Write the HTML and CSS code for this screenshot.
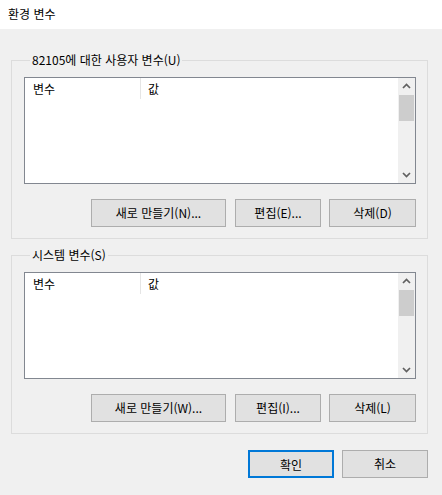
FILE: index.html
```html
<!DOCTYPE html>
<html lang="ko">
<head>
<meta charset="utf-8">
<title>환경 변수</title>
<link rel="stylesheet" href="styles.css">
</head>
<body>
<div class="window">
  <div class="titlebar">환경 변수</div>
  <div class="content">
    <fieldset class="group">
      <legend>82105에 대한 사용자 변수(U)</legend>
      <div class="list">
        <div class="list-body">
          <div class="header">
            <div class="col col-name">변수</div>
            <div class="col col-value">값</div>
          </div>
        </div>
        <div class="scrollbar">
          <div class="arrow"><svg width="17" height="17" viewBox="0 0 17 17"><polyline points="5,10 8.5,6.5 12,10" fill="none" stroke="#606060" stroke-width="1.7"/></svg></div>
          <div class="thumb"></div>
          <div class="track"></div>
          <div class="arrow"><svg width="17" height="17" viewBox="0 0 17 17"><polyline points="5,7 8.5,10.5 12,7" fill="none" stroke="#606060" stroke-width="1.7"/></svg></div>
        </div>
      </div>
      <div class="buttons">
        <button class="btn btn-wide">새로 만들기(N)...</button>
        <button class="btn btn-mid">편집(E)...</button>
        <button class="btn btn-last">삭제(D)</button>
      </div>
    </fieldset>
    <fieldset class="group group-second">
      <legend>시스템 변수(S)</legend>
      <div class="list">
        <div class="list-body">
          <div class="header">
            <div class="col col-name">변수</div>
            <div class="col col-value">값</div>
          </div>
        </div>
        <div class="scrollbar">
          <div class="arrow"><svg width="17" height="17" viewBox="0 0 17 17"><polyline points="5,10 8.5,6.5 12,10" fill="none" stroke="#606060" stroke-width="1.7"/></svg></div>
          <div class="thumb"></div>
          <div class="track"></div>
          <div class="arrow"><svg width="17" height="17" viewBox="0 0 17 17"><polyline points="5,7 8.5,10.5 12,7" fill="none" stroke="#606060" stroke-width="1.7"/></svg></div>
        </div>
      </div>
      <div class="buttons">
        <button class="btn btn-wide">새로 만들기(W)...</button>
        <button class="btn btn-mid">편집(I)...</button>
        <button class="btn btn-last">삭제(L)</button>
      </div>
    </fieldset>
    <div class="footer">
      <button class="btn btn-default">확인</button>
      <button class="btn">취소</button>
    </div>
  </div>
</div>
</body>
</html>
```

FILE: styles.css
```css
* { box-sizing: border-box; }
html, body {
  margin: 0;
  padding: 0;
  background: #f0f0f0;
}
body {
  font-family: "Noto Sans CJK KR", "Noto Sans", sans-serif;
  font-size: 12px;
  color: #000;
}
.window {
  width: 442px;
  height: 495px;
  overflow: hidden;
}
.titlebar {
  height: 29px;
  background: #fff;
  padding-left: 8px;
  line-height: 27px;
}
.content {
  padding: 23px 14px 0 11px;
}
.group {
  margin: 0;
  min-width: 0;
  border: 1px solid #dcdcdc;
  padding: 0 11px 11px 12px;
}
.group-second {
  margin-top: 8px;
}
.group legend {
  margin-left: 6px;
  padding: 0 2px;
  line-height: 16px;
  height: 16px;
}
.list {
  margin-top: 9px;
  height: 107px;
  border: 1px solid #828790;
  background: #fff;
  display: flex;
}
.list-body {
  flex: 1;
}
.header {
  display: flex;
  height: 21px;
}
.col {
  line-height: 21px;
}
.col-name {
  width: 116px;
  padding-left: 8px;
  border-right: 1px solid #e5e5e5;
}
.col-value {
  padding-left: 7px;
}
.scrollbar {
  width: 17px;
  background: #f0f0f0;
  display: flex;
  flex-direction: column;
}
.arrow {
  height: 17px;
}
.arrow svg { display: block; }
.thumb {
  height: 26px;
  margin: 0 1px;
  background: #cdcdcd;
}
.track { flex: 1; }
.buttons {
  margin-top: 15px;
  display: flex;
  justify-content: flex-end;
}
.btn {
  font-family: inherit;
  font-size: 12px;
  color: #000;
  height: 28px;
  width: 86px;
  padding: 0;
  background: #e1e1e1;
  border: 1px solid #adadad;
  border-radius: 0;
  line-height: 26px;
}
.btn-wide { width: 135px; }
.btn-mid { margin-left: 9px; }
.btn-last { margin-left: 8px; width: 87px; }
.footer {
  margin-top: 16px;
  display: flex;
  justify-content: flex-end;
  gap: 8px;
}
.btn-default {
  border: 2px solid #0078d7;
}
```
